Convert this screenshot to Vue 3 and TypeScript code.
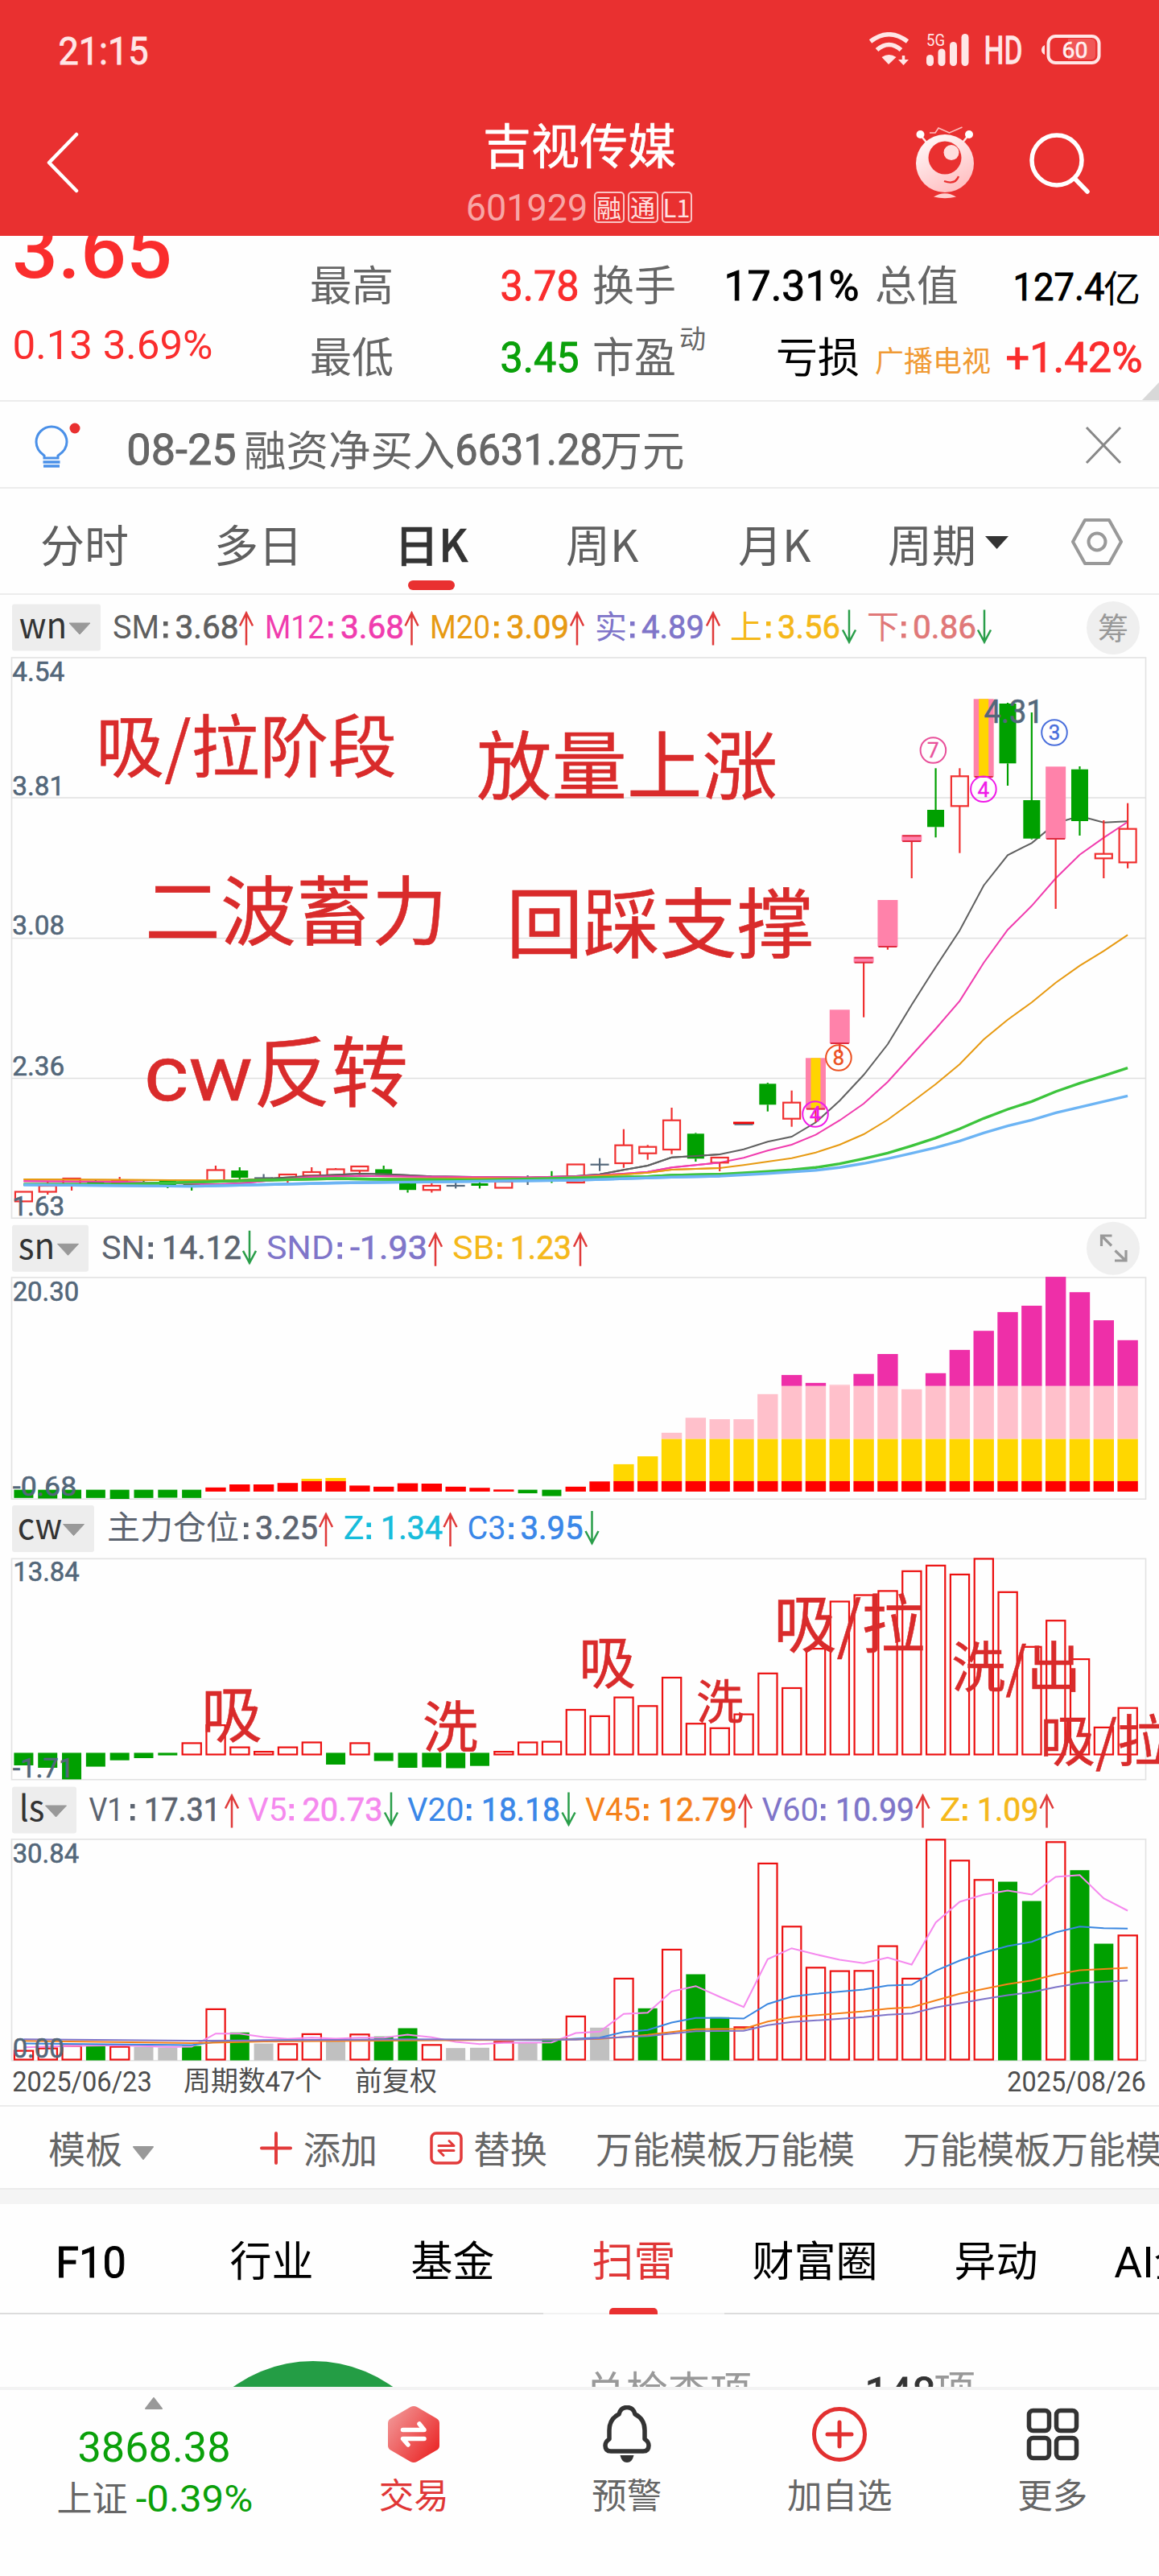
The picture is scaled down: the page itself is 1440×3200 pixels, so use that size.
<script setup lang="ts">
import { h } from 'vue'

/* Text run squeezed to a given ink width; its box is exactly as tall as the capitals. */
const Fit = (p: { t: string; w: number; s: number }) => {
  const cap = Math.round(p.s * 0.711)
  return h('svg', { width: p.w, height: cap, style: 'overflow:visible;display:block;flex:none' }, [
    h('text', {
      x: -p.s * 0.05, y: cap, 'font-size': p.s, fill: 'currentColor',
      textLength: p.w + p.s * 0.1, lengthAdjust: 'spacingAndGlyphs',
    }, p.t),
  ])
}
Fit.props = ['t', 'w', 's']

const FIRST = 29.4
const STEP = 29.82
const cx = (i: number) => FIRST + STEP * i

type Pt = [number, number]
const line = (pts: Pt[]) => pts.map(([i, y]) => `${cx(i).toFixed(1)},${y}`).join(' ')

interface LegendItem {
  c: string; t: string; x: number; w: number; k: number
  v: string; vx: number; vw: number; a: number; up: boolean; zh?: boolean
}
const it = (c: string, t: string, x: number, w: number, k: number, v: string, vx: number, vw: number, a: number, up: boolean, zh = false): LegendItem =>
  ({ c, t, x, w, k, v, vx, vw, a, up, zh })

const legends: { name: string; nx: number; nw: number; bw: number; tri: number; base: number; items: LegendItem[] }[] = [
  {
    name: 'wn', nx: 26, nw: 55, bw: 110, tri: 86, base: 792.5, items: [
      it('#5f5f5f', 'SM', 142, 54, 206, '3.68', 219.5, 75, 306, true),
      it('#f03cae', 'M12', 331, 70, 411, '3.68', 425, 75, 511.5, true),
      it('#e79a12', 'M20', 536, 71, 617, '3.09', 631, 74, 717, true),
      it('#7f75c9', '实', 739, 40, 786, '4.89', 799, 74, 886, true, true),
      it('#f5b81a', '上', 907, 40, 955, '3.56', 968, 74, 1055, false, true),
      it('#e07878', '下', 1077, 40, 1123, '0.86', 1136, 75, 1223, false, true),
    ],
  },
  {
    name: 'sn', nx: 25, nw: 41, bw: 95, tri: 71.5, base: 1563.8, items: [
      it('#5c6470', 'SN', 128, 50, 187.5, '14.12', 203, 95, 310, false),
      it('#7f75c9', 'SND', 333, 80, 422.5, '-1.93', 437, 92, 541, true),
      it('#f5b81a', 'SB', 564, 48.5, 621, '1.23', 636, 72, 721, true),
    ],
  },
  {
    name: 'cw', nx: 24, nw: 51, bw: 102, tri: 78.5, base: 1912, items: [
      it('#5c6470', '主力仓位', 133, 164, 306, '3.25', 319, 74, 405, true, true),
      it('#17bcdb', 'Z', 428.5, 22, 458.5, '1.34', 475, 73, 559.5, true),
      it('#3a87e8', 'C3', 582.5, 44, 635.5, '3.95', 648.5, 74, 735.5, false),
    ],
  },
  {
    name: 'ls', nx: 26, nw: 27, bw: 80, tri: 56.5, base: 2261, items: [
      it('#5c6470', 'V1', 112.5, 39, 165, '17.31', 181, 91, 288, true),
      it('#f589ee', 'V5', 310, 44.5, 362.5, '20.73', 377.5, 96, 486, false),
      it('#3a87e8', 'V20', 508, 66.5, 583, '18.18', 600, 94, 706.5, false),
      it('#f5811a', 'V45', 729, 65, 803, '12.79', 820, 94, 926, true),
      it('#7f75c9', 'V60', 948.5, 66.5, 1023, '10.99', 1040, 94, 1146.5, true),
      it('#f5b81a', 'Z', 1169.5, 22, 1199, '1.09', 1216, 72.5, 1300.5, true),
    ],
  },
]
const fitText = (t: string, x: number, w: number, s: number) => ({
  x: x - s * 0.05, 'font-size': s, textLength: w + s * 0.1, lengthAdjust: 'spacingAndGlyphs' as const, t,
})

/* [index, kind, top, bottom, high, low] — h hollow, g falling, x doji, p limit-up, y marked limit-up, r filled */
type Candle = [number, string, number, number, number, number]
const candles: Candle[] = [
  [0, 'h', 1480.5, 1492.4, 0, 0], [1, 'h', 1473, 1480.5, 1467, 1484], [2, 'h', 1464, 1472, 1463, 1479],
  [3, 'g', 1468, 1470, 1465, 1474], [4, 'r', 1466, 1472, 1462, 0], [5, 'g', 1468, 1470, 1467, 1473],
  [6, 'g', 1465, 1472, 0, 1476], [7, 'g', 1470, 1473, 1468, 1479], [8, 'h', 1453.5, 1467, 1448, 0],
  [9, 'g', 1454, 1463, 1450, 1466], [10, 'x', 1463.5, 1463.5, 1458.5, 1468], [11, 'h', 1459, 1464.5, 0, 1469.5],
  [12, 'h', 1456, 1460.3, 1450, 0], [13, 'h', 1452.5, 1460, 1451, 0], [14, 'h', 1449, 1454.3, 0, 1459.4],
  [15, 'g', 1452.5, 1459.4, 1448, 0], [16, 'g', 1470, 1478.2, 1463.5, 1481.5], [17, 'h', 1473, 1478.2, 1470, 1481.5],
  [18, 'x', 1473, 1473, 1468, 1476.4], [19, 'g', 1470, 1473, 1467, 1476.4], [20, 'h', 1468, 1475.5, 0, 0],
  [21, 'x', 1465, 1465, 1460, 1472], [22, 'g', 1463, 1466, 1454.8, 1469.5], [23, 'h', 1446.5, 1469, 0, 0],
  [24, 'x', 1446.7, 1446.7, 1438.7, 1454.7], [25, 'h', 1422.7, 1445, 1402.7, 1450.7], [26, 'h', 1424.7, 1432.7, 1422.3, 1440.7],
  [27, 'h', 1391.7, 1428, 1376, 1433.7], [28, 'g', 1408.3, 1439.3, 1407.3, 1443], [29, 'h', 1438, 1444.3, 0, 1455],
  [31, 'g', 1346.3, 1372.3, 1345, 1380.7], [32, 'h', 1369.7, 1389.7, 1354.7, 1399.7], [33, 'y', 1314.3, 1377.6, 0, 1394],
  [34, 'p', 1254.3, 1296, 0, 1308], [35, 'p', 1188.7, 1195.7, 0, 1263.7], [36, 'p', 1118, 1176, 0, 1179.7],
  [37, 'p', 1037.3, 1045, 0, 1091], [38, 'g', 1006, 1027.3, 954.3, 1040.3], [39, 'h', 964.3, 1001.3, 954.3, 1059.7],
  [40, 'y', 868.3, 965, 0, 0], [41, 'g', 874, 948.3, 873, 976], [42, 'g', 994, 1041.7, 885, 1042.7],
  [43, 'p', 952.3, 1042, 0, 1129], [44, 'g', 955.7, 1020, 952, 1038], [45, 'h', 1060.7, 1066.3, 1019, 1091],
  [46, 'h', 1029.7, 1071.3, 997.7, 1078.7],
]
const wickColor = (k: string) => (k === 'g' ? '#00a000' : k === 'x' ? '#53677a' : '#f03030')

const averages: { c: string; w: number; p: Pt[] }[] = [
  { c: '#606060', w: 2, p: [[0, 1471.8], [6, 1470], [8, 1467.5], [10, 1464.4], [12, 1460.8], [14, 1458], [15, 1458.5], [17, 1461.2], [21, 1463], [23, 1461], [24, 1458.7], [25, 1453.3], [26, 1448], [27, 1437.7], [28, 1436], [29, 1434], [30, 1427.7], [31, 1418.3], [32, 1412], [33, 1394.3], [34, 1367.3], [35, 1335.3], [36, 1297.3], [37, 1248.3], [38, 1201], [39, 1155.7], [40, 1100], [41, 1062.3], [42, 1047.3], [43, 1022.7], [44, 1013.7], [45, 1021.7], [46, 1020.3]] },
  { c: '#f03cae', w: 2, p: [[0, 1467.2], [4, 1468], [8, 1471.3], [9, 1470], [11, 1464.5], [12, 1461.7], [14, 1460.8], [17, 1461.7], [21, 1462.6], [23, 1461.3], [24, 1459.7], [25, 1458], [26, 1455.7], [27, 1450.3], [28, 1447.3], [29, 1444.3], [30, 1438.3], [31, 1429.3], [32, 1422], [33, 1409.7], [34, 1391.7], [35, 1371], [36, 1344], [37, 1311], [38, 1278], [39, 1243.3], [40, 1196], [41, 1155], [42, 1125.3], [43, 1091], [44, 1061.7], [45, 1040.7], [46, 1021]] },
  { c: '#e79a12', w: 2, p: [[0, 1465], [8, 1466.3], [12, 1464.5], [22, 1463.5], [23, 1462.3], [25, 1459], [26, 1456.7], [27, 1453], [29, 1451], [30, 1447.3], [32, 1438.7], [33, 1431.7], [34, 1422], [35, 1409], [36, 1391], [37, 1369.3], [38, 1346.7], [39, 1322], [40, 1291.3], [41, 1266.7], [42, 1245.3], [43, 1220.7], [44, 1199.7], [45, 1181.3], [46, 1161.3]] },
  { c: '#3cc43c', w: 3.4, p: [[0, 1471.3], [4, 1471], [6, 1469.5], [9, 1466.8], [13, 1464], [15, 1465], [19, 1466], [23, 1463.3], [26, 1461.7], [27, 1460], [29, 1458.7], [31, 1455.3], [32, 1453.3], [33, 1450.3], [34, 1445.7], [35, 1439.3], [36, 1432.3], [37, 1423.3], [38, 1413.7], [39, 1402.3], [40, 1389.3], [41, 1378], [42, 1368.3], [43, 1356], [44, 1345.7], [45, 1336.3], [46, 1326.7]] },
  { c: '#6cb4f4', w: 3.4, p: [[0, 1471.8], [7, 1473.6], [9, 1472.3], [13, 1469.5], [23, 1466], [27, 1462.3], [29, 1461], [31, 1457.7], [33, 1453.7], [34, 1450.3], [35, 1445.3], [36, 1439.3], [37, 1432.7], [38, 1425.7], [39, 1417.3], [40, 1407.3], [41, 1398.7], [42, 1391.3], [43, 1382.3], [44, 1375.3], [45, 1368.3], [46, 1361.3]] },
]

const priceTicks = [
  { t: '4.54', y: 846 }, { t: '3.81', y: 987.8 }, { t: '3.08', y: 1161.4 }, { t: '2.36', y: 1336 }, { t: '1.63', y: 1510 },
]
const marks = [
  { t: '7', x: 1159.4, y: 932, c: '#e8509a' }, { t: '4', x: 1221.9, y: 980.3, c: '#f01ae8' },
  { t: '3', x: 1310, y: 910, c: '#4a6fdc' }, { t: '8', x: 1041.9, y: 1314, c: '#ec5020' },
  { t: '4', x: 1013, y: 1384, c: '#f01ae8' },
]
const priceNotes = [
  { t: '吸/拉阶段', x: 119, y: 959, s: 85, w: 374 }, { t: '放量上涨', x: 592, y: 986, s: 93.5, w: 374 },
  { t: '二波蓄力', x: 180, y: 1167, s: 94, w: 376 }, { t: '回踩支撑', x: 629, y: 1183, s: 95, w: 382 },
]
const flowNotes = [
  { t: '吸', x: 250, y: 2158, s: 76, w: 76 }, { t: '洗', x: 525, y: 2171, s: 69, w: 69 },
  { t: '吸', x: 719, y: 2091, s: 71, w: 71 }, { t: '洗', x: 865, y: 2136, s: 59, w: 59 },
  { t: '吸/拉', x: 961, y: 2046.5, s: 79, w: 188 }, { t: '洗/出', x: 1182, y: 2095.5, s: 68, w: 161 },
  { t: '吸/拉', x: 1292, y: 2188, s: 69, w: 165 },
]

const ZERO = 1852.9
const below: Pt[] = [[0, 1860.8], [1, 1861.5], [2, 1861.5], [3, 1860.8], [4, 1862], [5, 1860.8], [6, 1860.5], [7, 1860.8], [21, 1855], [22, 1858.5]]
const above: Pt[] = [
  [8, 1847.8], [9, 1844], [10, 1844], [11, 1842.2], [12, 1837], [13, 1836], [14, 1845.4], [15, 1846.8], [16, 1842.6], [17, 1843],
  [18, 1846.8], [19, 1848.2], [20, 1850.3], [23, 1846.8], [24, 1840.3], [25, 1818.9], [26, 1809.1], [27, 1779.8], [28, 1761.2],
  [29, 1763], [30, 1763], [31, 1731.8], [32, 1708.1], [33, 1717.9], [34, 1720.2], [35, 1706.7], [36, 1682], [37, 1725.8],
  [38, 1705.8], [39, 1676.9], [40, 1653.2], [41, 1629.9], [42, 1622], [43, 1586.1], [44, 1605.2], [45, 1640.1], [46, 1664.8],
]
const bands = [
  { from: 0, to: 1721.8, c: '#ee2fa8' }, { from: 1721.8, to: 1787.6, c: '#ffc0cb' },
  { from: 1787.6, to: 1839.9, c: '#ffd700' }, { from: 1839.9, to: ZERO, c: '#ff0000' },
]
const stacks = above.flatMap(([i, top]) =>
  bands.filter(b => b.to > top).map(b => ({ i, y: Math.max(b.from, top), h: b.to - Math.max(b.from, top), c: i === 34 && b.from === 0 ? '#ffc0cb' : b.c })))

type Bar = [number, string, number]
const flow: Bar[] = [
  [0, 'g', 2193], [1, 'g', 2196], [2, 'g', 2210.4], [3, 'g', 2194.6], [4, 'g', 2186.7], [5, 'g', 2184], [6, 'g', 2180.6],
  [7, 'r', 2164.3], [8, 'r', 2142], [9, 'r', 2169.5], [10, 'r', 2175], [11, 'r', 2169.5], [12, 'r', 2163.4], [13, 'g', 2192],
  [14, 'r', 2164.3], [15, 'g', 2187.6], [16, 'g', 2196], [17, 'g', 2195.5], [18, 'g', 2196.5], [19, 'g', 2193.7],
  [20, 'r', 2175], [21, 'r', 2163.4], [22, 'r', 2162.5], [23, 'r', 2122.9], [24, 'r', 2130.8], [25, 'r', 2107.5],
  [26, 'r', 2118.2], [27, 'r', 2082.9], [28, 'r', 2140.1], [29, 'r', 2145.7], [30, 'r', 2128.5], [31, 'r', 2077.7],
  [32, 'r', 2095.9], [33, 'r', 2047], [34, 'r', 1988.4], [35, 'r', 1980.4], [36, 'r', 1975.3], [37, 'r', 1950.7],
  [38, 'r', 1943.7], [39, 'r', 1954.8], [40, 'r', 1935.3], [41, 'r', 1976.7], [42, 'r', 2044.7], [43, 'r', 2012.1],
  [44, 'r', 2060], [45, 'r', 2144.8], [46, 'r', 2120.6],
]
const volume: Bar[] = [
  [0, 'r', 2546], [1, 'r', 2543], [2, 'r', 2540], [3, 'g', 2541], [4, 'r', 2541], [5, 's', 2542], [6, 's', 2543], [7, 'g', 2541],
  [8, 'r', 2494.3], [9, 'g', 2524.3], [10, 's', 2538], [11, 'r', 2537.7], [12, 'r', 2525.3], [13, 's', 2533], [14, 'r', 2525.7],
  [15, 'g', 2529.3], [16, 'g', 2519], [17, 'r', 2538.7], [18, 's', 2543.7], [19, 's', 2543.3], [20, 'r', 2535], [21, 's', 2537],
  [22, 'g', 2532.3], [23, 'r', 2503.3], [24, 's', 2518.3], [25, 'r', 2456.3], [26, 'g', 2494.3], [27, 'r', 2420.3],
  [28, 'g', 2452], [29, 'g', 2505.3], [30, 'r', 2516.7], [31, 'r', 2313.3], [32, 'r', 2391.7], [33, 'r', 2442.7],
  [34, 'r', 2447], [35, 'r', 2446.7], [36, 'r', 2416], [37, 'r', 2456.3], [38, 'r', 2283.7], [39, 'r', 2309.7],
  [40, 'r', 2333.7], [41, 'g', 2337], [42, 'g', 2361], [43, 'r', 2286.7], [44, 'g', 2322.7], [45, 'g', 2414], [46, 'r', 2402.7],
]
const volumeLines: { c: string; p: Pt[] }[] = [
  { c: '#f589ee', p: [[0, 2542.7], [2, 2541], [4, 2540.3], [6, 2542.3], [7, 2542], [8, 2525.7], [9, 2525.7], [10, 2530], [11, 2532.3], [12, 2530.7], [13, 2532], [14, 2530.7], [15, 2530.7], [16, 2527], [17, 2530.3], [18, 2536], [19, 2538.7], [20, 2537.3], [22, 2536.7], [23, 2525], [24, 2523.3], [25, 2501.3], [26, 2499.7], [27, 2473.3], [28, 2466.7], [29, 2480], [30, 2492.7], [31, 2433.3], [32, 2419.7], [33, 2427.3], [34, 2434], [35, 2438.3], [36, 2431.3], [37, 2440], [38, 2387.7], [39, 2362], [40, 2353], [41, 2348], [42, 2353], [43, 2331], [44, 2328.7], [45, 2357.7], [46, 2373]] },
  { c: '#3a87e0', p: [[0, 2538], [7, 2540], [8, 2536], [10, 2534], [16, 2533], [22, 2534], [23, 2532], [24, 2530.7], [25, 2523.7], [26, 2521.3], [27, 2512], [28, 2506.3], [29, 2506.3], [30, 2507], [31, 2489], [32, 2479.7], [33, 2476.3], [35, 2471], [36, 2466], [37, 2465], [38, 2447.7], [39, 2435], [40, 2425.3], [41, 2417], [42, 2411.7], [43, 2400], [44, 2392.7], [45, 2394.7], [46, 2395.3]] },
  { c: '#f5811a', p: [[0, 2534.7], [7, 2537.5], [10, 2535.5], [23, 2533], [24, 2532.3], [26, 2527.3], [28, 2520.3], [30, 2519.7], [31, 2510.7], [32, 2505.3], [35, 2498], [36, 2494.7], [37, 2493], [38, 2484.5], [39, 2476.3], [41, 2464.3], [42, 2459.7], [43, 2452.3], [44, 2447], [46, 2444]] },
  { c: '#7f75c9', p: [[0, 2532.7], [7, 2534.5], [16, 2533], [23, 2533.3], [25, 2530], [26, 2528.7], [28, 2522.7], [30, 2522.3], [31, 2515.3], [32, 2511.3], [35, 2505.3], [36, 2502.3], [37, 2500.7], [38, 2493.3], [40, 2482.7], [41, 2478], [42, 2474.3], [43, 2468], [44, 2463], [46, 2459.7]] },
]
const barColor = (k: string) => (k === 'g' ? '#00a000' : '#c0c0c0')

const panels = [
  { top: 739, bottom: 1514, box: 817 }, { top: 1514, bottom: 1863, box: 1587 },
  { top: 1863, bottom: 2211.5, box: 1936.3 }, { top: 2211.5, bottom: 2560, box: 2284.3 },
]
</script>

<template>
  <div class="app">
    <header class="head">
      <div class="status">
        <Fit class="clock med" t="21:15" :w="107" :s="49" />
        <svg width="54" height="42" viewBox="0 0 54 42" fill="none" stroke="#ffe6e6">
          <path d="M3.500 11.500Q26.500 -6 49.500 11.500" stroke-width="5.500" />
          <path d="M11.500 22Q26.500 9 41.500 22" stroke-width="5.500" />
          <path d="M17.500 31Q26.500 25 35.500 31L26 40Z" fill="#ffe6e6" stroke="none" />
          <path d="M44.500 29v6" stroke-width="3.500" /><path d="M38 34h13l-6.500 7z" fill="#ffe6e6" stroke="none" />
        </svg>
        <svg class="signal" width="54" height="40" viewBox="0 0 54 40" fill="#ffe6e6">
          <text x="0" y="15" font-size="20" textLength="23" lengthAdjust="spacingAndGlyphs">5G</text>
          <rect x="0" y="26" width="9" height="14" rx="4.500" /><rect x="14.500" y="18.500" width="9" height="21.500" rx="4.500" />
          <rect x="29" y="10" width="9" height="30" rx="4.500" /><rect x="43.500" y="0" width="9" height="40" rx="4.500" />
        </svg>
        <Fit class="hd" t="HD" :w="43" :s="48" />
        <svg class="battery" width="74" height="37" viewBox="0 0 74 37">
          <path d="M4 13v12Q0 23 0 19t4-6z" fill="#ffe6e6" />
          <rect x="8.500" y="2" width="63" height="33" rx="9" fill="none" stroke="#ffe6e6" stroke-width="4" />
          <path d="M33 5h28q6 0 6 6v15q0 5-6 5H33z" fill="#f05656" />
          <text x="41.500" y="28.500" font-size="28" text-anchor="middle" fill="#fff0f0" stroke="#fff0f0" stroke-width=".6" textLength="32" lengthAdjust="spacingAndGlyphs">60</text>
        </svg>
      </div>
      <div class="nav">
        <svg class="back" width="42" height="76" viewBox="0 0 42 76" fill="none" stroke="#fff" stroke-width="4.500" stroke-linecap="round" stroke-linejoin="round">
          <path d="M38 3L4 38l34 35" />
        </svg>
        <div class="title">
          <span class="zh name">吉视传媒</span>
          <div class="code">
            <Fit class="num" t="601929" :w="147" :s="47" />
            <span class="tag zh">融</span><span class="tag zh">通</span><span class="tag zh">L1</span>
          </div>
        </div>
        <div class="tools">
          <svg class="robot" width="74" height="92" viewBox="0 0 74 92">
            <defs><linearGradient id="rb" x1="0" y1="0" x2=".5" y2="1"><stop offset="0" stop-color="#fff" /><stop offset="1" stop-color="#ffc2c4" /></linearGradient></defs>
            <path d="M6 11l9 11M67 11l-8 10" stroke="#ffe6e6" stroke-width="2.500" />
            <circle cx="6.500" cy="11" r="5" fill="#fff" /><circle cx="67" cy="11" r="5" fill="#fff" />
            <path d="M18 9h7l4-6 13.500 6 16-7" fill="none" stroke="#ffc0c0" stroke-width="1.600" />
            <circle cx="37" cy="47" r="36" fill="url(#rb)" />
            <circle cx="37" cy="40" r="20.500" fill="#e93030" /><circle cx="45" cy="33.500" r="9.500" fill="#ffdede" />
            <path d="M36 69Q50 74 54 63" fill="none" stroke="#e93030" stroke-width="2.300" />
            <path d="M23 88.500Q37 80 51 88.500Q37 92 23 88.500z" fill="#ffd0d0" />
          </svg>
          <svg width="78" height="78" viewBox="0 0 78 78" fill="none" stroke="#fff" stroke-width="5.500" stroke-linecap="round">
            <circle cx="35" cy="35" r="31" /><path d="M57.500 58l15.500 16" />
          </svg>
        </div>
      </div>
    </header>

    <section class="quote">
      <div class="price">
        <Fit class="bold" t="3.65" :w="189" :s="98" />
        <Fit class="chg" t="0.13 3.69%" :w="244" :s="50" />
      </div>
      <div class="stats">
        <div class="stat">
          <div class="pair"><span class="zh">最高</span><Fit class="med red" t="3.78" :w="93" :s="51" /></div>
          <div class="pair"><span class="zh">换手</span><Fit class="med black in" t="17.31%" :w="163" :s="51" /></div>
          <div class="pair"><span class="zh">总值</span><span class="sum black"><Fit class="med" t="127.4" :w="109" :s="48" /><span class="zh yi">亿</span></span></div>
        </div>
        <div class="stat second">
          <div class="pair"><span class="zh">最低</span><Fit class="med green" t="3.45" :w="93" :s="51" /></div>
          <div class="pair"><span class="zh">市盈</span><span class="zh sup">动</span><span class="zh black end">亏损</span></div>
          <div class="pair"><span class="zh sector">广播电视</span><Fit class="med red" t="+1.42%" :w="165" :s="51" /></div>
        </div>
      </div>
      <i class="corner"></i>
    </section>

    <section class="news">
      <svg width="60" height="60" viewBox="0 0 60 60" fill="none" stroke="#4a90e8" stroke-width="3">
        <path d="M14 43V40Q4 33 4 23a19 19 0 0 1 38 0Q42 33 31 40v3z" transform="translate(0 4)" />
        <path d="M12.500 52h21M13 57h20" stroke-width="3.400" /><circle cx="52" cy="10" r="6.500" fill="#e93030" stroke="none" />
      </svg>
      <div class="newstext">
        <Fit class="med" t="08-25" :w="131" :s="53" /><span class="zh n1">融资净买入</span>
        <Fit class="med" t="6631.28" :w="178" :s="53" /><span class="zh n2">万元</span>
      </div>
      <svg width="46" height="48" viewBox="0 0 46 48" fill="none" stroke="#888" stroke-width="3"><path d="M2 2l42 44M44 2L2 46" /></svg>
    </section>

    <nav class="periods">
      <span class="zh p1">分时</span><span class="zh p2">多日</span><span class="zh p3 on">日K<i></i></span>
      <span class="zh p4">周K</span><span class="zh p5">月K</span>
      <span class="zh p6">周期<svg width="31" height="16" viewBox="0 0 31 16"><path d="M1 0h29L15.500 16z" fill="#333" /></svg></span>
      <svg class="hex" width="64" height="58" viewBox="0 0 64 58" fill="none" stroke="#999" stroke-width="4" stroke-linejoin="round">
        <path d="M17 2h30l15 27-15 27H17L2 29z" /><circle cx="32" cy="29" r="10.500" />
      </svg>
    </nav>

    <section class="charts">
      <svg v-for="(p, n) in panels" :key="p.top" class="panel" width="1440" :height="p.bottom - p.top" :viewBox="`0 ${p.top} 1440 ${p.bottom - p.top}`">
        <!-- indicator legend -->
        <rect x="15" :y="legends[n].base - 42" :width="legends[n].bw" height="58" rx="3" fill="#ededed" />
        <text v-bind="fitText(legends[n].name, legends[n].nx, legends[n].nw, 44)" :y="legends[n].base" class="zhf" fill="#333">{{ legends[n].name }}</text>
        <path :d="`M${legends[n].tri} ${legends[n].base - 18.500}h26l-13 14z`" fill="#999" stroke="#999" stroke-linejoin="round" />
        <g v-for="l in legends[n].items" :key="l.t" :fill="l.c">
          <text v-if="l.zh" class="zhf" :x="l.x" :y="legends[n].base" :font-size="l.w > 100 ? 41 : 40">{{ l.t }}</text>
          <text v-else v-bind="fitText(l.t, l.x, l.w, 41)" :y="legends[n].base">{{ l.t }}</text>
          <rect :x="l.k - 3" :y="legends[n].base - 5.500" width="5.500" height="5.500" /><rect :x="l.k - 3" :y="legends[n].base - 20.500" width="5.500" height="5.500" />
          <text class="medium" :stroke="l.c" v-bind="fitText(l.v, l.vx, l.vw, 41)" :y="legends[n].base">{{ l.v }}</text>
          <path v-if="l.up" :d="`M${l.a} ${legends[n].base + 9}v-41m-8 17l8-16 8 16`" fill="none" stroke="#e03a3a" stroke-width="2.500" />
          <path v-else :d="`M${l.a} ${legends[n].base - 35}v41m-8-16l8 15 8-15`" fill="none" stroke="#2a9e4a" stroke-width="2.500" />
        </g>
        <rect x="14.500" :y="p.box" width="1409" :height="p.bottom - p.box - 0.800" fill="none" stroke="#e2e2e2" stroke-width="1.600" />

        <template v-if="n === 0">
          <circle cx="1383" cy="780" r="33" fill="#efefef" />
          <text class="zhf" x="1364" y="794" font-size="38" fill="#999">筹</text>
          <path d="M14 991H1423M14 1165.500H1423M14 1339.500H1423" stroke="#e0e0e0" stroke-width="1.500" />
          <polyline v-for="a in averages" :key="a.c" :points="line(a.p)" fill="none" :stroke="a.c" :stroke-width="a.w" />
          <g v-for="[i, k, t, b, hi, lo] in candles" :key="i">
            <path v-if="hi" :d="`M${cx(i)} ${hi}V${t}`" :stroke="wickColor(k)" stroke-width="2.200" />
            <path v-if="lo" :d="`M${cx(i)} ${b}V${lo}`" :stroke="wickColor(k)" stroke-width="2.200" />
            <rect v-if="k === 'h'" :x="cx(i) - 10.500" :y="t" width="21" :height="b - t" fill="none" stroke="#f03030" stroke-width="2.200" />
            <rect v-else-if="k === 'g'" :x="cx(i) - 10.500" :y="t" width="21" :height="b - t" fill="#00a000" />
            <rect v-else-if="k === 'r'" :x="cx(i) - 10.500" :y="t" width="21" :height="b - t" fill="#e04a30" />
            <path v-else-if="k === 'x'" :d="`M${cx(i) - 11.500} ${t}h23`" stroke="#53677a" stroke-width="2.200" />
            <g v-else>
              <rect :x="cx(i) - 12.500" :y="t" width="25" :height="b - t" fill="#ff82aa" />
              <rect v-if="k === 'y'" :x="cx(i) - 6" :y="t" width="12" :height="b - t" fill="#ffd500" />
              <path :d="`M${cx(i) - 11.500} ${b}h23`" stroke="#e02a40" stroke-width="2" />
              <path v-if="b - t < 10" :d="`M${cx(i) - 11.500} ${t + 1}h23`" stroke="#e02a40" stroke-width="2" />
            </g>
          </g>
          <polyline v-for="a in averages" :key="a.c + 'b'" :points="line(a.p.filter(q => q[0] < 30))" fill="none" :stroke="a.c" :stroke-width="a.w" />
          <path d="M911 1395h26" stroke="#f00000" stroke-width="3" /><path d="M912.500 1397h23" stroke="#53677a" stroke-width="1.600" />
          <text v-bind="fitText('4.31', 1224.6, 70, 40)" y="897.500" fill="#53677a" stroke="#53677a" stroke-width=".6">4.31</text>
          <g v-for="m in marks" :key="m.x" fill="none" :stroke="m.c">
            <circle :cx="m.x" :cy="m.y" r="15.800" stroke-width="2" />
            <text :x="m.x" :y="m.y + 9.300" text-anchor="middle" font-size="26" :fill="m.c" stroke-width=".4">{{ m.t }}</text>
          </g>
          <g fill="#53677a" stroke="#53677a" stroke-width=".6">
            <text v-for="k in priceTicks" :key="k.t" v-bind="fitText(k.t, 17, 61.500, 34)" :y="k.y">{{ k.t }}</text>
          </g>
          <text v-for="a in priceNotes" :key="a.t" class="note" :x="a.x" :y="a.y" :font-size="a.s" :textLength="a.w" lengthAdjust="spacingAndGlyphs">{{ a.t }}</text>
          <text class="note" x="179" y="1367" font-size="96"><tspan class="latin" textLength="135" lengthAdjust="spacingAndGlyphs">cw</tspan><tspan x="315">反转</tspan></text>
        </template>

        <template v-if="n === 1">
          <circle cx="1383" cy="1550.700" r="33" fill="#efefef" />
          <path d="M1381 1547.500l-12-12M1368.500 1548v-13h13M1385.500 1553.500l12.500 12M1399 1553v13h-14" fill="none" stroke="#999" stroke-width="3.200" />
          <rect v-for="[i, b] in below" :key="'b' + i" :x="cx(i) - 12" y="1850.600" width="24" :height="b - 1850.600" fill="#00a000" />
          <rect v-for="(s, j) in stacks" :key="j" :x="cx(s.i) - 12.700" :y="s.y" width="25.400" :height="s.h" :fill="s.c" />
          <g fill="#53677a" stroke="#53677a" stroke-width=".6">
            <text v-bind="fitText('20.30', 17.4, 79, 34)" y="1616.400">20.30</text>
            <text v-bind="fitText('-0.68', 17.5, 76, 34)" y="1858">-0.68</text>
          </g>
        </template>

        <template v-if="n === 2">
          <g v-for="[i, k, t] in flow" :key="i">
            <rect v-if="k === 'r'" :x="cx(i) - 11.500" :y="t + 1.100" width="23.200" :height="2179.500 - t - 1.100" fill="none" stroke="#ec1010" stroke-width="2.200" />
            <rect v-else :x="cx(i) - 12" y="2177.400" width="24" :height="t - 2177.400" fill="#00a000" />
          </g>
          <g fill="#53677a" stroke="#53677a" stroke-width=".6">
            <text v-bind="fitText('13.84', 18, 79, 34)" y="1964.200">13.84</text>
            <text v-bind="fitText('-1.71', 17.5, 73, 34)" y="2208">-1.71</text>
          </g>
          <text v-for="a in flowNotes" :key="a.x" class="note" :x="a.x" :y="a.y" :font-size="a.s" :textLength="a.w" lengthAdjust="spacingAndGlyphs">{{ a.t }}</text>
        </template>

        <template v-if="n === 3">
          <g v-for="[i, k, t] in volume" :key="i">
            <rect v-if="k === 'r'" :x="cx(i) - 11.500" :y="t + 1.100" width="23.200" :height="2558 - t - 1.100" fill="none" stroke="#ec1010" stroke-width="2.200" />
            <rect v-else :x="cx(i) - 12" :y="t" width="24" :height="2559 - t" :fill="barColor(k)" />
          </g>
          <polyline v-for="a in volumeLines" :key="a.c" :points="line(a.p)" fill="none" :stroke="a.c" stroke-width="2" />
          <g fill="#53677a" stroke="#53677a" stroke-width=".6">
            <text v-bind="fitText('30.84', 17.4, 79, 34)" y="2313.700">30.84</text>
            <text v-bind="fitText('0.00', 17.4, 60.5, 34)" y="2555">0.00</text>
          </g>
        </template>
      </svg>
    </section>

    <div class="dates">
      <Fit t="2025/06/23" :w="170" :s="35" />
      <span class="zh d1">周期数</span><Fit class="d2" t="47" :w="34" :s="35" /><span class="zh">个</span>
      <span class="zh d3">前复权</span>
      <Fit class="last" t="2025/08/26" :w="169" :s="35" />
    </div>

    <div class="templates">
      <span class="zh t1">模板</span>
      <svg class="t2" width="28" height="17" viewBox="0 0 28 17"><path d="M2 1h24L14 16z" fill="#999" stroke="#999" stroke-width="2" stroke-linejoin="round" /></svg>
      <i class="sep"></i>
      <svg class="t3" width="40" height="41" viewBox="0 0 40 41" stroke="#e23a3a" stroke-width="4" stroke-linecap="round"><path d="M2 20.500h36M20 2v37" /></svg>
      <span class="zh t4">添加</span>
      <svg class="t5" width="41" height="41" viewBox="0 0 41 41" fill="none" stroke="#e23a3a" stroke-width="3.500" stroke-linecap="round" stroke-linejoin="round">
        <rect x="2" y="2" width="37" height="37" rx="6" /><path d="M11 17.500h19l-6-6M30 23.500H11l6 6" stroke-width="3" />
      </svg>
      <span class="zh t6">替换</span>
      <span class="zh t7">万能模板万能模</span>
      <span class="zh t8">万能模板万能模板</span>
    </div>
    <div class="band"></div>

    <nav class="sections">
      <div class="f10"><Fit class="med" t="F10" :w="82" :s="54" /></div>
      <div><span class="zh">行业</span></div><div><span class="zh">基金</span></div>
      <div class="on"><span class="zh">扫雷</span><i></i></div>
      <div><span class="zh">财富圈</span></div><div><span class="zh">异动</span></div>
      <div class="ai"><Fit t="AI" :w="44" :s="54" /><span class="zh">全</span></div>
    </nav>

    <section class="scan">
      <div class="dial"></div>
      <span class="zh total">总检查项</span>
      <span class="count"><Fit class="med" t="148" :w="83" :s="52" /><span class="zh">项</span></span>
    </section>

    <footer class="foot">
      <div class="index">
        <svg width="24" height="15" viewBox="0 0 24 15"><path d="M12 1l10 13H2z" fill="#999" stroke="#999" stroke-width="2" stroke-linejoin="round" /></svg>
        <Fit class="green i1" t="3868.38" :w="185" :s="52" />
        <div class="i2"><span class="zh">上证</span><Fit class="green" t="-0.39%" :w="141" :s="46" /></div>
      </div>
      <div class="act trade">
        <svg width="64" height="72" viewBox="0 0 64 72">
          <defs><linearGradient id="hx" x1="0" y1=".1" x2="1" y2=".9"><stop offset="0" stop-color="#f29a9a" /><stop offset="1" stop-color="#ea2020" /></linearGradient></defs>
          <path d="M28 2q4-2 8 0l24 14q4 2 4 6v28q0 4-4 6L36 70q-4 2-8 0L4 56q-4-2-4-6V22q0-4 4-6z" fill="url(#hx)" />
          <path d="M18.500 30.500H45L39 23M45 41.500H18.500L25 49" fill="none" stroke="#fff" stroke-width="5.500" stroke-linecap="round" stroke-linejoin="round" />
        </svg>
        <span class="zh">交易</span>
      </div>
      <div class="act">
        <svg width="60" height="72" viewBox="0 0 60 72" fill="none" stroke="#333" stroke-width="5.500" stroke-linejoin="round">
          <path d="M8 42V31Q8 17 20 11q2-8.500 10-8.500T40 11q12 6 12 20v11q5 3 5 8 0 7-7 7H10q-7 0-7-7 0-5 5-8z" />
          <path d="M21.500 62h17q-2 9-8.500 9t-8.500-9z" fill="#333" stroke="none" />
        </svg>
        <span class="zh">预警</span>
      </div>
      <div class="act">
        <svg width="70" height="72" viewBox="0 0 70 72" fill="none" stroke="#e23030" stroke-width="5" stroke-linecap="round"><circle cx="35" cy="36" r="31.500" /><path d="M20 36h30M35 21v30" /></svg>
        <span class="zh">加自选</span>
      </div>
      <div class="act">
        <svg width="66" height="72" viewBox="0 0 66 72" fill="none" stroke="#333" stroke-width="5.500">
          <rect x="3.500" y="6.500" width="25" height="25" rx="5" /><rect x="37.500" y="6.500" width="25" height="25" rx="5" />
          <rect x="3.500" y="40.500" width="25" height="25" rx="5" /><rect x="37.500" y="40.500" width="25" height="25" rx="5" />
        </svg>
        <span class="zh">更多</span>
      </div>
    </footer>
  </div>
</template>

<style>
body { background: #fff; }
</style>

<style scoped>
.app { width: 1440px; height: 3200px; overflow: hidden; position: relative; font-family: Roboto, 'Noto Sans CJK SC', sans-serif; color: #666; background: #fefefe; display: flex; flex-direction: column; }
.app > * { flex: none; box-sizing: border-box; }
.zh { font-family: 'Noto Sans CJK SC', sans-serif; line-height: 1; margin-bottom: -0.064em; white-space: nowrap; }
.zhf { font-family: 'Noto Sans CJK SC', sans-serif; }
.med { stroke: currentColor; stroke-width: 0.9px; }
.medium { stroke-width: 0.7px; }
.bold { font-weight: 500; }
.red { color: #fa2d2d; } .green { color: #0aa00a; } .black { color: #000; }
svg { display: block; flex: none; }

.head { height: 293px; background: #e93030; }
.status { height: 82px; padding-left: 75px; display: flex; align-items: flex-end; color: #ffe6e6; }
.clock { margin-bottom: 2px; margin-right: 896px; }
.signal { margin: 0 0 0 19px; }
.hd { margin: 0 0 3px 20px; stroke: currentColor; stroke-width: 1.5px; }
.battery { margin: 0 0 2px 26px; }
.nav { display: grid; grid-template-columns: 570px 300px 1fr; }
.back { margin: 82px 0 0 57px; }
.title { padding-top: 66px; display: flex; flex-direction: column; align-items: center; }
.name { font-size: 60px; color: #fff; margin: 0; -webkit-text-stroke: 0.6px #fff; }
.code { margin-top: 30px; height: 39px; display: flex; align-items: flex-end; gap: 4px; }
.num { color: #f7a6a6; margin: 0 6px 3px 0; }
.tag { box-sizing: border-box; width: 38px; height: 39px; margin: 0; border: 2px solid #f9c4c4; border-radius: 5px; color: #ffe0e0; font-size: 31px; line-height: 34px; text-align: center; }
.tools { display: flex; align-items: flex-start; padding: 74px 0 0 267px; gap: 67px; }
.tools svg:last-child { margin-top: 8px; }

.quote { height: 206px; border-bottom: 2px solid #ececec; position: relative; overflow: hidden; display: flex; }
.price { width: 385px; padding-left: 20px; box-sizing: border-box; color: #fa2d2d; margin-top: -18px; }
.chg { margin: 65px 0 0 -2px; }
.stat { height: 80px; display: flex; align-items: flex-end; gap: 19px; font-size: 52px; }
.second { height: 89px; }
.pair { display: flex; align-items: flex-end; justify-content: space-between; width: 332px; }
.pair .zh { margin-bottom: -5px; }
.pair:last-child { width: 330px; }
.in { margin-right: 3px; }
.sum { display: flex; align-items: flex-end; }
.pair .yi { font-size: 46px; margin-left: 1px; }
.pair .sup { font-size: 33px; align-self: flex-start; margin: -12px 0 0 4px; }
.end { margin-left: auto; }
.pair .sector { font-size: 36px; color: #f09a34; margin-bottom: -2px; }
.corner { position: absolute; right: 0; bottom: 0; border-style: solid; border-width: 0 0 22px 21px; border-color: transparent transparent #d8d8d8; }

.news { height: 108px; border-bottom: 2px solid #ececec; display: flex; padding: 23px 0 0 41px; }
.newstext { display: flex; align-items: flex-end; height: 55px; margin-left: 59px; width: 1188px; }
.n1 { font-size: 52.500px; margin: 0 2px -5px 12px; }
.n2 { font-size: 52.500px; margin: 0 0 -5px; }
.news > svg:last-child { margin-top: 7px; }

.periods { height: 132px; border-bottom: 2px solid #ececec; display: flex; align-items: flex-end; padding: 0 0 39px 50px; font-size: 55px; color: #5f5f5f; }
.p1 { width: 216px; } .p2 { width: 224px; } .p3 { width: 213px; position: relative; } .p4 { width: 214px; } .p5 { width: 186px; }
.p6 { width: 228px; display: flex; align-items: flex-end; }
.p6 svg { margin: 0 0 20px 10px; }
.periods .on { color: #333; font-weight: 500; -webkit-text-stroke: 0.6px #333; }
.periods .on i { position: absolute; left: 17px; top: 74px; width: 58px; height: 12px; border-radius: 6px; background: #e93030; }
.hex { margin-bottom: -4px; }

.charts { height: 1821px; }
.note { font-family: 'Noto Sans CJK SC', sans-serif; fill: #d92b2b; stroke: #d92b2b; stroke-width: 0.5px; }
.latin { font-family: Roboto, sans-serif; }
.panel { overflow: visible; }

.dates { height: 57px; border-bottom: 2px solid #ececec; display: flex; align-items: flex-end; padding: 0 18px 17px 17px; font-size: 34px; color: #4d4d4d; }
.d1 { margin-left: 41px; } .d2 { margin: 0 1px; } .d3 { margin-left: 41px; } .last { margin-left: auto; }

.templates { height: 101px; display: flex; align-items: flex-end; padding: 0 0 31px 60px; font-size: 46px; overflow: hidden; }
.t2 { margin: 0 0 4px 12px; }
.sep { width: 2px; height: 52px; background: #ececec; margin: 0 0 -8px 64px; }
.t3 { margin: 0 0 -2px 67px; } .t4 { margin-left: 14px; } .t5 { margin: 0 0 -2px 65px; } .t6 { margin-left: 13px; } .t7 { margin-left: 60px; } .t8 { margin-left: 60px; }
.band { height: 20px; background: #f4f4f4; border-top: 2px solid #ececec; }

.sections { height: 137px; display: flex; font-size: 52px; color: #000; overflow: hidden; }
.sections > div { width: 225px; flex: none; box-sizing: border-box; border-bottom: 2px solid #dcdcdc; display: flex; align-items: flex-end; justify-content: center; padding-bottom: 44px; position: relative; }
.sections .on { color: #e03636; border-color: #f2f2f2; }
.sections .on i { position: absolute; left: 82px; bottom: -2px; width: 60px; height: 8px; border-radius: 5px 5px 0 0; background: #e93030; }
.sections .ai { justify-content: flex-start; padding-left: 37px; }
.ai .zh { margin-left: 3px; }

.scan { height: 90px; overflow: hidden; display: flex; color: #999; font-size: 52px; }
.dial { width: 340px; height: 340px; border-radius: 50%; background: #249d45; margin: 58px 0 0 219px; flex: none; }
.total { margin: 67px 0 0 167px; }
.count { display: flex; align-items: flex-end; height: 115px; margin-left: 143px; }
.count svg { color: #333; }

.foot { height: 235px; border-top: 4px solid #f3f3f3; background: #fefefe; display: flex; }
.index { width: 382px; display: flex; flex-direction: column; align-items: center; padding-top: 9px; }
.i1 { margin-top: 28px; }
.i2 { display: flex; align-items: flex-end; font-size: 44px; margin-top: 25px; gap: 12px; height: 37px; }
.act { width: 264.500px; display: flex; flex-direction: column; align-items: center; padding-top: 19px; font-size: 43.500px; }
.act .zh { margin-top: 16px; }
.trade { color: #e03636; }
</style>
